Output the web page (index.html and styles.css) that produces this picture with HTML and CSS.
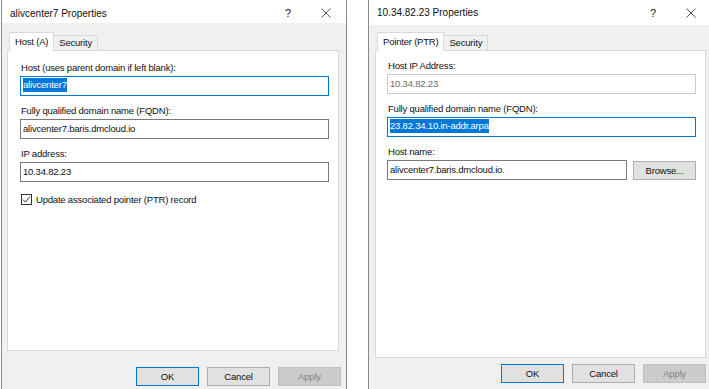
FILE: index.html
```html
<!DOCTYPE html>
<html lang="en">
<head>
    <meta charset="UTF-8">
    <title>DNS Record Properties</title>
    <link rel="stylesheet" href="styles.css">
</head>
<body>
<div class="desktop">
    <!-- Host (A) record dialog -->
    <div class="dialog dialog-host">
        <div class="titlebar">
            <span class="title">alivcenter7 Properties</span>
            <span class="caption-btn">?</span>
            <span class="caption-btn">
                <svg width="10" height="10" viewBox="0 0 10 10"><path d="M0.5 0.5 L9.5 9.5 M9.5 0.5 L0.5 9.5" stroke="#444" stroke-width="0.9" fill="none"/></svg>
            </span>
        </div>
        <div class="dlg-body">
            <div class="tabs">
                <div class="tab active">Host (A)</div>
                <div class="tab">Security</div>
            </div>
            <div class="panel">
                <div class="field">
                    <div class="label">Host (uses parent domain if left blank):</div>
                    <div class="textbox focused"><span class="sel">alivcenter7</span></div>
                </div>
                <div class="field">
                    <div class="label">Fully qualified domain name (FQDN):</div>
                    <div class="textbox">alivcenter7.baris.dmcloud.io</div>
                </div>
                <div class="field">
                    <div class="label">IP address:</div>
                    <div class="textbox">10.34.82.23</div>
                </div>
                <div class="check-row">
                    <span class="checkbox">
                        <svg width="9" height="9" viewBox="0 0 9 9"><path d="M1 4.6 L3.4 7 L8 1.6" stroke="#333" stroke-width="1" fill="none"/></svg>
                    </span>
                    <span>Update associated pointer (PTR) record</span>
                </div>
            </div>
            <div class="buttons">
                <button class="btn default">OK</button>
                <button class="btn">Cancel</button>
                <button class="btn disabled">Apply</button>
            </div>
        </div>
    </div>

    <!-- Pointer (PTR) record dialog -->
    <div class="dialog dialog-ptr">
        <div class="titlebar">
            <span class="title">10.34.82.23 Properties</span>
            <span class="caption-btn">?</span>
            <span class="caption-btn">
                <svg width="10" height="10" viewBox="0 0 10 10"><path d="M0.5 0.5 L9.5 9.5 M9.5 0.5 L0.5 9.5" stroke="#444" stroke-width="0.9" fill="none"/></svg>
            </span>
        </div>
        <div class="dlg-body">
            <div class="tabs">
                <div class="tab active">Pointer (PTR)</div>
                <div class="tab">Security</div>
            </div>
            <div class="panel">
                <div class="field">
                    <div class="label">Host IP Address:</div>
                    <div class="textbox disabled">10.34.82.23</div>
                </div>
                <div class="field">
                    <div class="label">Fully qualified domain name (FQDN):</div>
                    <div class="textbox focused"><span class="sel">23.82.34.10.in-addr.arpa</span></div>
                </div>
                <div class="field">
                    <div class="label">Host name:</div>
                    <div class="browse-row">
                        <div class="textbox">alivcenter7.baris.dmcloud.io.</div>
                        <button class="btn">Browse...</button>
                    </div>
                </div>
            </div>
            <div class="buttons">
                <button class="btn default">OK</button>
                <button class="btn">Cancel</button>
                <button class="btn disabled">Apply</button>
            </div>
        </div>
    </div>
</div>
</body>
</html>
```

FILE: styles.css
```css
body {
    margin: 0;
    background-color: #FFFFFF;
    font-family: "Liberation Sans", Arial, sans-serif;
    overflow: hidden;
}
.desktop {
    display: flex;
    gap: 21px;
    height: 389px;
}
.dialog {
    background-color: #F0F0F0;
    border-left: 1px solid #8A8A8A;
    border-right: 1px solid #8A8A8A;
    display: flex;
    flex-direction: column;
    flex-shrink: 0;
}
.dialog-host {
    margin-left: 1px;
    width: 344px;
}
.dialog-ptr {
    width: 342px;
}
.titlebar {
    background-color: #FFFFFF;
    display: flex;
    align-items: center;
    padding-left: 8px;
    padding-right: 1px;
    font-size: 10px;
    color: #111111;
}
.dialog-host .titlebar {
    height: 23px;
    padding-top: 3px;
    box-sizing: border-box;
}
.dialog-ptr .titlebar {
    height: 25px;
}
.title {
    flex: 1;
}
.caption-btn {
    width: 38px;
    display: flex;
    justify-content: center;
    align-items: center;
    font-size: 11px;
    color: #222222;
}
.dlg-body {
    display: flex;
    flex-direction: column;
}
.dialog-host .dlg-body {
    padding: 9px 7px 0 5px;
}
.dialog-ptr .dlg-body {
    padding: 7px 5px 0 6px;
}
.tabs {
    display: flex;
    align-items: flex-end;
    margin-left: 2px;
    margin-bottom: -1px;
    position: relative;
    z-index: 1;
}
.tab {
    height: 15px;
    line-height: 14px;
    padding: 0 5px;
    margin-bottom: 1px;
    margin-left: -1px;
    border: 1px solid #D9D9D9;
    border-bottom: none;
    box-sizing: border-box;
    background-color: #F0F0F0;
    font-size: 9.5px;
    letter-spacing: -0.2px;
    color: #111111;
}
.tab.active {
    margin-left: 0;
    margin-bottom: 0;
    height: 19px;
    padding-top: 2px;
    background-color: #FFFFFF;
}
.panel {
    background-color: #FFFFFF;
    border: 1px solid #D9D9D9;
    box-sizing: border-box;
    display: flex;
    flex-direction: column;
    gap: 9px;
}
.dialog-host .panel {
    height: 301px;
    padding: 11px 9px 0 12px;
}
.dialog-ptr .panel {
    height: 308px;
    padding: 9px 9px 0 11px;
}
.field {
    display: flex;
    flex-direction: column;
    gap: 2px;
}
.label {
    font-size: 9.5px;
    letter-spacing: -0.2px;
    line-height: 12px;
    padding-left: 1px;
    color: #111111;
}
.textbox {
    height: 20px;
    box-sizing: border-box;
    border: 1px solid #7A7A7A;
    background-color: #FFFFFF;
    padding-left: 2px;
    font-size: 9.5px;
    letter-spacing: -0.2px;
    line-height: 18px;
    color: #111111;
    white-space: nowrap;
}
.textbox.focused {
    border-color: #0078D7;
}
.textbox.disabled {
    border-color: #CCCCCC;
    color: #6D6D6D;
}
.sel {
    display: inline-block;
    background-color: #0078D7;
    color: #FFFFFF;
    line-height: 14px;
    vertical-align: middle;
    margin-top: -2px;
}
.browse-row {
    display: flex;
    gap: 6px;
    align-items: flex-start;
}
.browse-row .textbox {
    flex: 1;
}
.browse-row .btn {
    margin-top: 1px;
}
.check-row {
    display: flex;
    align-items: center;
    gap: 4px;
    margin-top: 3px;
    padding-left: 1px;
    font-size: 9.5px;
    letter-spacing: -0.2px;
    color: #111111;
}
.checkbox {
    width: 11px;
    height: 11px;
    box-sizing: border-box;
    border: 1px solid #333333;
    background-color: #FFFFFF;
    display: flex;
    justify-content: center;
    align-items: center;
}
.buttons {
    display: flex;
    justify-content: flex-end;
    gap: 8px;
}
.dialog-host .buttons {
    margin-top: 16px;
    margin-right: -2px;
}
.dialog-ptr .buttons {
    margin-top: 6px;
}
.btn {
    width: 63px;
    height: 19px;
    padding: 0;
    border: 1px solid #ADADAD;
    background-color: #E1E1E1;
    font-family: "Liberation Sans", Arial, sans-serif;
    font-size: 9.5px;
    letter-spacing: -0.2px;
    color: #111111;
}
.btn.default {
    border-color: #0078D7;
}
.btn.disabled {
    background-color: #CCCCCC;
    border-color: #BFBFBF;
    color: #838383;
}
```
